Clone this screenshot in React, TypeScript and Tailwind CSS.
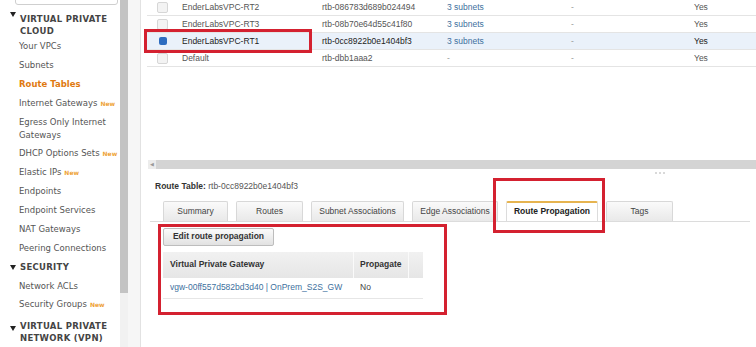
import React from "react";

const side = "font-['DejaVu_Sans',Verdana,sans-serif]";
const arial = "font-['Liberation_Sans',Arial,sans-serif]";

function NewTag() {
    return <span className="ml-[3px] text-[6px] font-bold text-[#eea236]">New</span>;
}

function Caret() {
    return (
        <svg width="6" height="5" viewBox="0 0 6 5" className="absolute left-[10px] top-[7px]">
            <path d="M0 0 H6 L3 5 Z" fill="#222" />
        </svg>
    );
}

function NavItem({ label, active, tag }: { label: string; active?: boolean; tag?: boolean }) {
    return (
        <div
            className={`h-[19px] flex items-center pl-[19px] whitespace-nowrap ${
                active ? "text-[#e07a10] font-bold" : "text-[#555]"
            }`}
        >
            {label}
            {tag && <NewTag />}
        </div>
    );
}

function Sidebar() {
    return (
        <aside className={`w-[120px] shrink-0 bg-white text-[8.5px] ${side}`}>
            <div className="ml-[15px] w-[103px] h-[17px] mt-[-12px] border border-[#cfcfcf] rounded-[3px] bg-white" />
            <div className="relative pl-[20px] pt-[8px] leading-[12px] font-bold text-[#444] tracking-[0.3px]">
                <Caret />
                <div>VIRTUAL PRIVATE</div>
                <div>CLOUD</div>
            </div>
            <NavItem label="Your VPCs" />
            <NavItem label="Subnets" />
            <NavItem label="Route Tables" active />
            <NavItem label="Internet Gateways" tag />
            <div className="h-[31px] flex flex-col justify-center pl-[19px] leading-[13px] text-[#555]">
                <div>Egress Only Internet</div>
                <div>Gateways</div>
            </div>
            <NavItem label="DHCP Options Sets" tag />
            <NavItem label="Elastic IPs" tag />
            <NavItem label="Endpoints" />
            <NavItem label="Endpoint Services" />
            <NavItem label="NAT Gateways" />
            <NavItem label="Peering Connections" />
            <div className="relative h-[19px] flex items-center pl-[20px] font-bold text-[#444] tracking-[0.3px]">
                <svg width="6" height="5" viewBox="0 0 6 5" className="absolute left-[10px] top-[7px]">
                    <path d="M0 0 H6 L3 5 Z" fill="#222" />
                </svg>
                SECURITY
            </div>
            <div className="h-[18px] flex items-center pl-[19px] text-[#555]">Network ACLs</div>
            <NavItem label="Security Groups" tag />
            <div className="relative pl-[20px] pt-[6px] leading-[12px] font-bold text-[#444] tracking-[0.3px]">
                <svg width="6" height="5" viewBox="0 0 6 5" className="absolute left-[10px] top-[12px]">
                    <path d="M0 0 H6 L3 5 Z" fill="#222" />
                </svg>
                <div>VIRTUAL PRIVATE</div>
                <div>NETWORK (VPN)</div>
            </div>
        </aside>
    );
}

const rows = [
    { name: "EnderLabsVPC-RT2", id: "rtb-086783d689b024494", sub: "3 subnets" },
    { name: "EnderLabsVPC-RT3", id: "rtb-08b70e64d55c41f80", sub: "3 subnets" },
    { name: "EnderLabsVPC-RT1", id: "rtb-0cc8922b0e1404bf3", sub: "3 subnets", selected: true },
    { name: "Default", id: "rtb-dbb1aaa2", sub: "-" },
];

function TableRow({ r }: { r: (typeof rows)[number] }) {
    const dark = r.selected ? "text-[#222]" : "text-[#555]";
    return (
        <div className={`h-[17px] flex items-center border-b border-[#e4e4e4] ${r.selected ? "bg-[#eaf1fa]" : ""}`}>
            <div className="w-[35px] pl-[10px]">
                {r.selected ? (
                    <div className="w-[11px] h-[11px] flex items-center justify-center">
                        <div className="w-[8px] h-[8px] rounded-[2px] bg-[#2d6cc0]" />
                    </div>
                ) : (
                    <div className="w-[11px] h-[11px] rounded-[2px] border border-[#d6d6d6] bg-[#f3f3f3]" />
                )}
            </div>
            <div className={`w-[140px] ${dark}`}>{r.name}</div>
            <div className={`w-[125px] ${dark}`}>{r.id}</div>
            <div className={`w-[124px] ${r.sub === "-" ? "text-[#999]" : "text-[#40709e]"}`}>{r.sub}</div>
            <div className="w-[123px] text-[#999]">-</div>
            <div className={dark}>Yes</div>
        </div>
    );
}

const tabs = [
    { label: "Summary", w: "w-[65px]" },
    { label: "Routes", w: "w-[67px]" },
    { label: "Subnet Associations", w: "w-[93px]" },
    { label: "Edge Associations", w: "w-[86px]" },
    { label: "Route Propagation", w: "w-[92px]", active: true },
    { label: "Tags", w: "w-[67px]" },
];

export default function App() {
    return (
        <div className={`w-[756px] h-[347px] overflow-hidden flex bg-white ${arial}`}>
            <Sidebar />
            <div className="w-[8px] shrink-0 bg-[#f1f1f1]">
                <div className="h-[293px] bg-[#c3c3c3]" />
            </div>
            <div className="w-[13px] shrink-0 bg-[#f6f6f6] border-r border-[#e2e2e2]" />

            <main className="relative flex-1 flex flex-col text-[8.5px]">
                <div className="pl-[6px] mt-[-1px]">
                    {rows.map((r) => (
                        <TableRow key={r.name} r={r} />
                    ))}
                </div>
                <div className="absolute left-[3px] top-[29px] w-[168px] h-[24px] border-[3px] border-[#d42130]" />

                {/* horizontal scroll bar */}
                <div className="ml-[7px] mt-[93px] h-[9px] flex bg-[#ececec]">
                    <div className="w-[8px] flex items-center justify-center text-[#999] text-[5px]">◀</div>
                    <div className="flex-1 bg-[#d4d4d4]" />
                </div>
                <div className="ml-[514px] mt-[3px] h-[3px] flex gap-[2px]">
                    <div className="w-[2px] h-[2px] rounded-full bg-[#ccc]" />
                    <div className="w-[2px] h-[2px] rounded-full bg-[#ccc]" />
                    <div className="w-[2px] h-[2px] rounded-full bg-[#ccc]" />
                </div>

                <div className="ml-[14px] mt-[5px] text-[#555]">
                    <span className="font-bold text-[#333]">Route Table:</span> rtb-0cc8922b0e1404bf3
                </div>

                {/* tabs */}
                <div className="ml-[9px] mr-[6px] mt-[8px] pl-[13px] flex gap-[8px] border-b border-[#dcdcdc]">
                    {tabs.map((t) =>
                        t.active ? (
                            <div
                                key={t.label}
                                className={`${t.w} h-[20px] mb-[-1px] flex items-center justify-center bg-white border-x border-[#dcdcdc] border-t-2 border-t-[#e6b450] rounded-t-[2px] font-bold text-[#222]`}
                            >
                                {t.label}
                            </div>
                        ) : (
                            <div
                                key={t.label}
                                className={`${t.w} h-[20px] flex items-center justify-center bg-gradient-to-b from-[#fafafa] to-[#e9e9e9] border-x border-t border-[#d8d8d8] rounded-t-[2px] text-[#444]`}
                            >
                                {t.label}
                            </div>
                        )
                    )}
                </div>
                <div className="absolute left-[352px] top-[178px] w-[112px] h-[55px] border-[3px] border-[#d42130]" />

                {/* route propagation panel */}
                <div className="ml-[17px] mt-[2px] w-[289px] h-[91px] border-[3px] border-[#d42130] pl-[2px] pt-[1px]">
                    <div className="w-[111px] h-[18px] flex items-center justify-center border border-[#bdbdbd] rounded-[2px] bg-gradient-to-b from-[#fbfbfb] to-[#e2e2e2] font-bold text-[#333]">
                        Edit route propagation
                    </div>
                    <div className="mt-[6px] w-[260px]">
                        <div className="h-[26px] flex items-center bg-gradient-to-b from-[#f1f1f1] to-[#e6e6e6] font-bold text-[#333]">
                            <div className="w-[191px] pl-[7px] h-full flex items-center border-r border-[#fafafa]">
                                Virtual Private Gateway
                            </div>
                            <div className="w-[55px] pl-[6px] h-full flex items-center border-r border-[#fafafa]">
                                Propagate
                            </div>
                        </div>
                        <div className="h-[21px] flex items-center border-b border-[#e6e6e6]">
                            <div className="w-[191px] pl-[7px] text-[#40709e]">vgw-00ff557d582bd3d40 | OnPrem_S2S_GW</div>
                            <div className="pl-[6px] text-[#444]">No</div>
                        </div>
                    </div>
                </div>
            </main>
        </div>
    );
}
